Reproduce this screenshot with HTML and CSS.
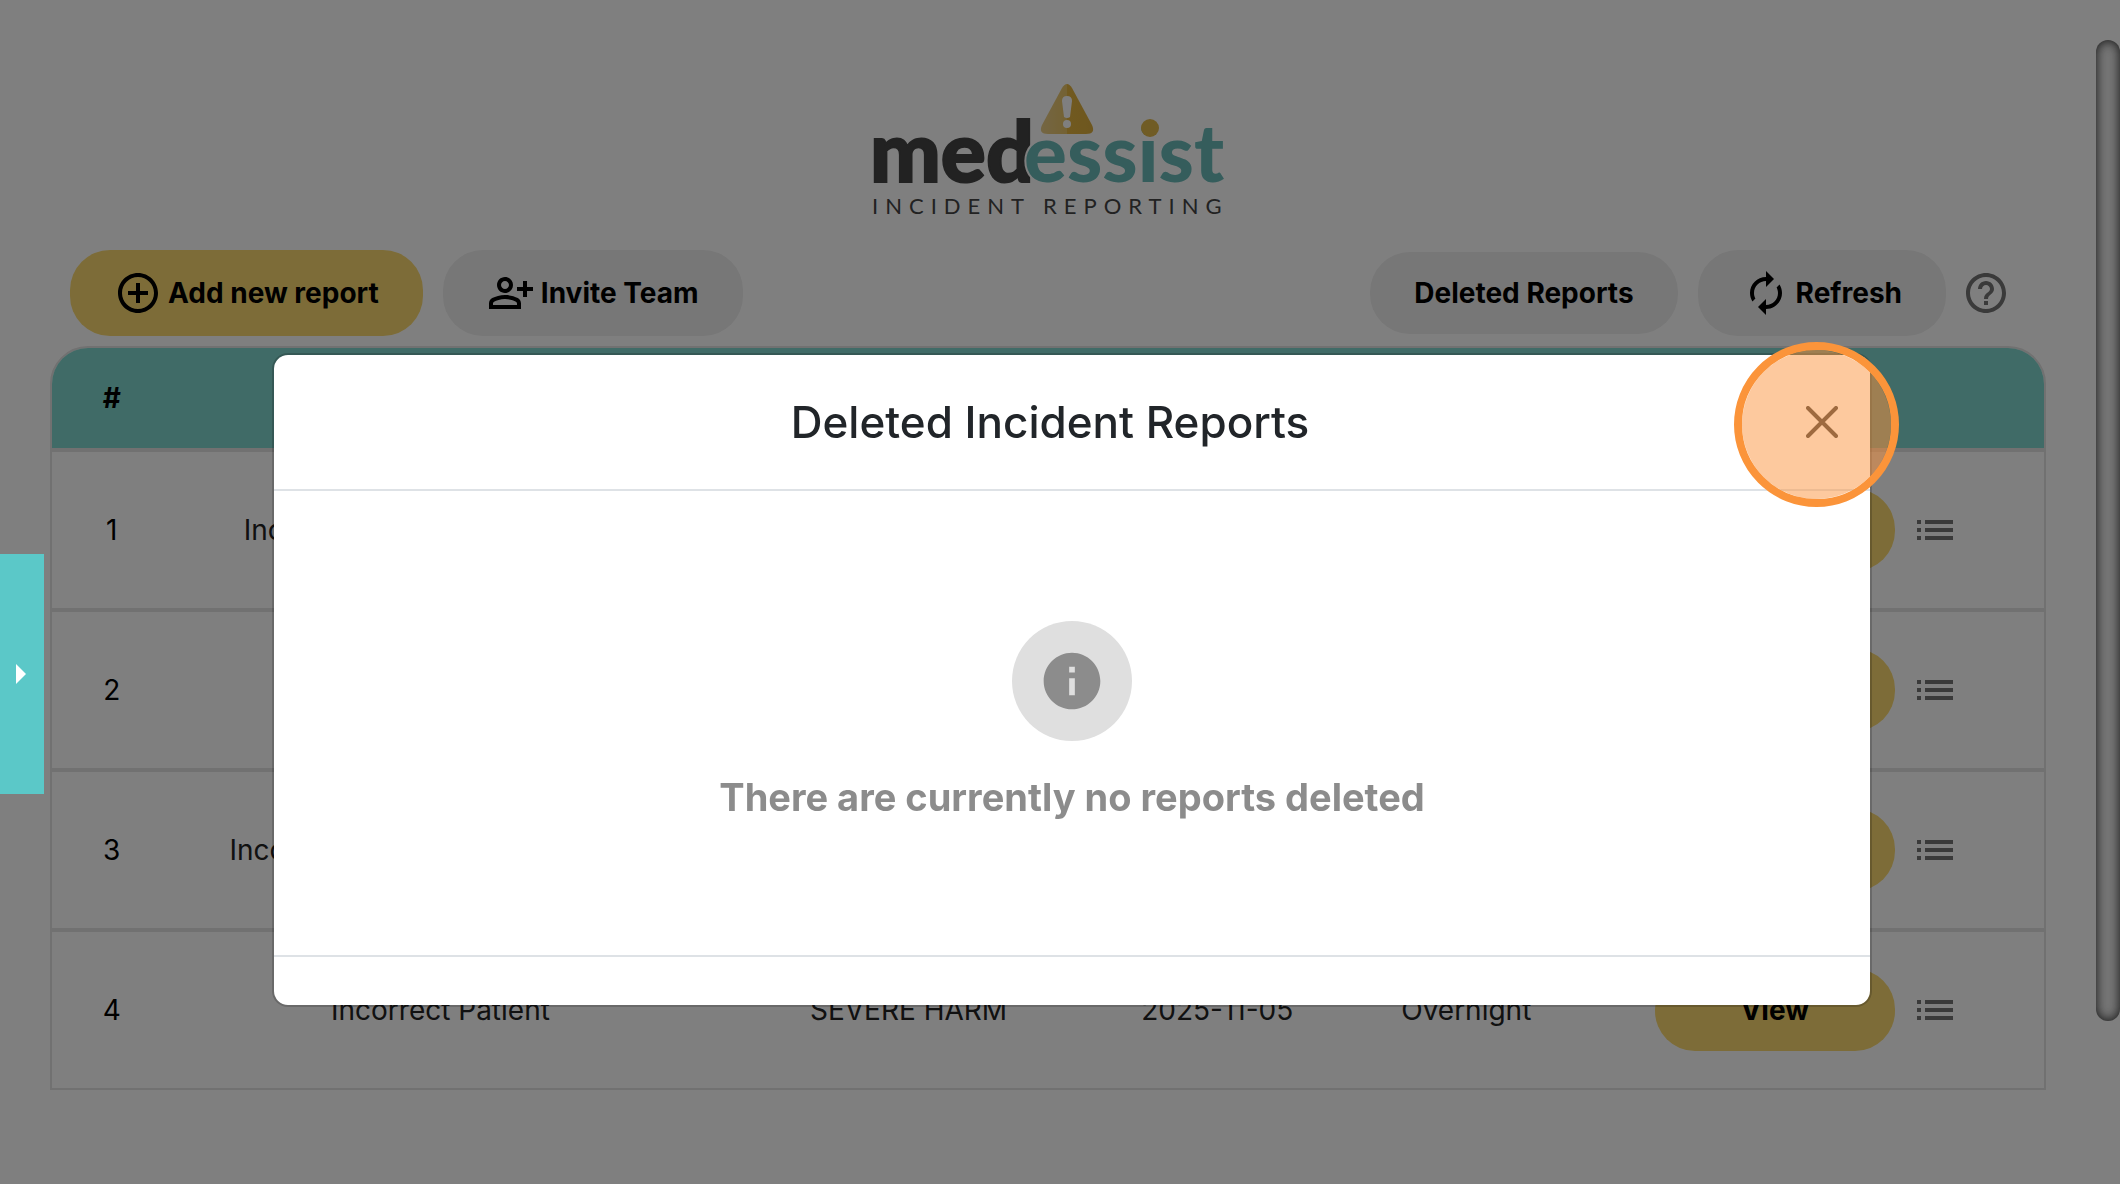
FILE: index.html
```
<!DOCTYPE html>
<html lang="en">
<head>
  <meta charset="utf-8">
  <title>Incident Reporting</title>
  <link rel="stylesheet" href="styles.css">
</head>
<body>
  <svg width="0" height="0" class="sprite" aria-hidden="true">
    <symbol id="icon-list" viewBox="0 0 24 24">
      <path d="M3 13h2v-2H3v2zm0 4h2v-2H3v2zm0-8h2V7H3v2zm4 4h14v-2H7v2zm0 4h14v-2H7v2zM7 7v2h14V7H7z"/>
    </symbol>
  </svg>

  <main class="page">
    <header class="logo">
      <svg width="360" height="140" viewBox="0 0 360 140" role="img" aria-label="medessist incident reporting">
        <defs>
          <linearGradient id="warn" x1="0" x2="1">
            <stop offset="0" stop-color="#e8cc88"/>
            <stop offset="0.5" stop-color="#e8c466"/>
            <stop offset="0.5" stop-color="#e3b440"/>
            <stop offset="1" stop-color="#dcae3e"/>
          </linearGradient>
        </defs>
        <text class="logo-med" x="2" y="104">med</text>
        <text class="logo-essist logo-halo" x="156" y="104" aria-hidden="true">essist</text>
        <circle cx="282" cy="50" r="9" fill="#e0b84a"/>
        <path fill="url(#warn)" d="M194 10q5-8 10 0l20 37q4 9-6 9h-38q-10 0-6-9z"/>
        <path fill="#fff" d="M194 23q0-5 5-5t5 5l-2 16q-3 2-6 0z"/>
        <circle cx="199" cy="46" r="4" fill="#fff"/>
        <text class="logo-sub" x="4" y="136">INCIDENT REPORTING</text>
      </svg>
    </header>

    <div class="toolbar">
      <button class="btn btn-primary" type="button">
        <svg class="icon" viewBox="0 0 24 24"><path d="M13 7h-2v4H7v2h4v4h2v-4h4v-2h-4V7zm-1-5C6.48 2 2 6.48 2 12s4.48 10 10 10 10-4.48 10-10S17.52 2 12 2zm0 18c-4.41 0-8-3.59-8-8s3.59-8 8-8 8 3.59 8 8-3.59 8-8 8z"/></svg>
        Add new report
      </button>
      <button class="btn btn-invite" type="button">
        <svg class="icon" viewBox="0 0 24 24"><path d="M20 9V6h-2v3h-3v2h3v3h2v-3h3V9h-3zM9 12c2.21 0 4-1.790 4-4s-1.790-4-4-4-4 1.790-4 4 1.790 4 4 4zm0-6c1.100 0 2 .9 2 2s-.9 2-2 2-2-.9-2-2 .9-2 2-2zm6.390 8.560C13.710 13.700 11.530 13 9 13s-4.710.7-6.390 1.560C1.610 15.070 1 16.100 1 17.220V20h16v-2.780c0-1.120-.61-2.150-1.610-2.660zM15 18H3v-.78c0-.38.2-.72.52-.88C4.710 15.730 6.630 15 9 15s4.290.73 5.480 1.340c.32.16.52.5.52.88V18z"/></svg>
        Invite Team
      </button>
      <button class="btn btn-deleted" type="button">Deleted Reports</button>
      <button class="btn btn-refresh" type="button">
        <svg class="icon" viewBox="0 0 24 24"><path d="M12 6v3l4-4-4-4v3c-4.420 0-8 3.580-8 8 0 1.570.46 3.030 1.240 4.260L6.700 14.800c-.45-.83-.7-1.790-.7-2.800 0-3.310 2.690-6 6-6zm6.760 1.740L17.300 9.200c.44.84.7 1.790.7 2.800 0 3.310-2.690 6-6 6v-3l-4 4 4 4v-3c4.420 0 8-3.580 8-8 0-1.570-.46-3.030-1.240-4.260z"/></svg>
        Refresh
      </button>
      <button class="btn-icon" type="button" aria-label="Help">
        <svg width="40" height="40" viewBox="2 2 20 20"><path d="M11 18h2v-2h-2v2zm1-16C6.480 2 2 6.480 2 12s4.480 10 10 10 10-4.480 10-10S17.520 2 12 2zm0 18c-4.410 0-8-3.590-8-8s3.590-8 8-8 8 3.590 8 8-3.590 8-8 8zm0-14c-2.210 0-4 1.790-4 4h2c0-1.100.9-2 2-2s2 .9 2 2c0 2-3 1.750-3 5h2c0-2.250 3-2.500 3-5 0-2.210-1.790-4-4-4z"/></svg>
      </button>
    </div>

    <div class="table-wrap">
      <table class="reports">
        <thead>
          <tr>
            <th class="col-num">#</th>
            <th class="col-type" aria-label="Type"></th>
            <th class="col-harm" aria-label="Severity"></th>
            <th class="col-date" aria-label="Date"></th>
            <th class="col-shift" aria-label="Shift"></th>
            <th aria-label="Actions"></th>
          </tr>
        </thead>
        <tbody>
          <tr>
            <td>1</td>
            <td>Incorrect Medication Quantity</td>
            <td>NO HARM</td>
            <td>2025-11-05</td>
            <td>Morning</td>
            <td><div class="actions"><button class="btn btn-view" type="button">View</button><button class="btn-icon" type="button" aria-label="Options"><svg class="icon"><use href="#icon-list"/></svg></button></div></td>
          </tr>
          <tr>
            <td>2</td>
            <td>Incorrect Patient</td>
            <td>NO HARM</td>
            <td>2025-11-05</td>
            <td>Morning</td>
            <td><div class="actions"><button class="btn btn-view" type="button">View</button><button class="btn-icon" type="button" aria-label="Options"><svg class="icon"><use href="#icon-list"/></svg></button></div></td>
          </tr>
          <tr>
            <td>3</td>
            <td>Incorrect Medication Dispensed</td>
            <td>MILD HARM</td>
            <td>2025-11-05</td>
            <td>Overnight</td>
            <td><div class="actions"><button class="btn btn-view" type="button">View</button><button class="btn-icon" type="button" aria-label="Options"><svg class="icon"><use href="#icon-list"/></svg></button></div></td>
          </tr>
          <tr>
            <td>4</td>
            <td>Incorrect Patient</td>
            <td>SEVERE HARM</td>
            <td>2025-11-05</td>
            <td>Overnight</td>
            <td><div class="actions"><button class="btn btn-view" type="button">View</button><button class="btn-icon" type="button" aria-label="Options"><svg class="icon"><use href="#icon-list"/></svg></button></div></td>
          </tr>
        </tbody>
      </table>
    </div>
  </main>

  <div class="backdrop"></div>
  <div class="scroll-thumb"></div>
  <button class="side-tab" type="button" aria-label="Open menu"><span class="arrow"></span></button>

  <div class="modal-holder">
    <section class="modal" role="dialog" aria-labelledby="modal-title">
      <header class="modal-header">
        <h1 id="modal-title">Deleted Incident Reports</h1>
        <button class="btn-close" type="button" aria-label="Close">
          <svg width="32" height="32" viewBox="0 0 32 32"><path d="M2 2l28 28M30 2L2 30"/></svg>
          <span class="click-marker"></span>
        </button>
      </header>
      <div class="modal-body">
        <div class="info">
          <svg width="68" height="68" viewBox="0 0 24 24"><path d="M12 2C6.480 2 2 6.480 2 12s4.480 10 10 10 10-4.480 10-10S17.520 2 12 2zm1 15h-2v-6h2v6zm0-8h-2V7h2v2z"/></svg>
        </div>
        <p>There are currently no reports deleted</p>
      </div>
      <footer class="modal-footer"></footer>
    </section>
  </div>
</body>
</html>
```

FILE: styles.css
```
* {
  box-sizing: border-box;
}
body {
  margin: 0;
  min-height: 100vh;
  background: #fff;
  color: #222;
  font-family: Inter, "Liberation Sans", sans-serif;
  font-size: 28px;
}
button {
  border: 0;
  background: none;
  font: inherit;
  color: #000;
  padding: 0;
  cursor: pointer;
}
.sprite {
  position: absolute;
}
.icon {
  display: block;
  flex: none;
  width: 48px;
  height: 48px;
  fill: currentColor;
}

.page {
  padding: 78px 74px 0 50px;
}
.logo {
  display: flex;
  justify-content: center;
  margin-bottom: 32px;
}
.logo-med,
.logo-essist {
  font-family: Lato, sans-serif;
  font-size: 80px;
  font-weight: 900;
}
.logo-med {
  font-size: 84px;
  fill: #444;
  stroke: #444;
  stroke-width: 2;
}
.logo-essist {
  fill: #6abab8;
}
.logo-halo {
  stroke: #fff;
  stroke-width: 4;
  paint-order: stroke;
}
.logo-sub {
  font-family: Lato, sans-serif;
  font-size: 22px;
  letter-spacing: 7px;
  fill: #444;
}

.toolbar {
  display: flex;
  align-items: center;
  gap: 20px;
  padding: 0 40px 0 20px;
  margin-bottom: 10px;
}
.btn {
  display: flex;
  align-items: center;
  justify-content: center;
  gap: 6px;
  height: 86px;
  padding: 0 44px;
  border-radius: 40px;
  background: #eee;
  font-weight: 700;
}
.btn-primary,
.btn-view {
  background: #fad970;
}
.btn-deleted {
  height: 82px;
  margin-left: auto;
}
.btn-icon {
  color: #757575;
}
.btn-icon svg {
  display: block;
  fill: currentColor;
}

.table-wrap {
  border: 2px solid #e2e2e2;
  border-radius: 38px 38px 0 0;
  overflow: hidden;
}
.reports {
  width: 100%;
  table-layout: fixed;
  border-collapse: separate;
  border-spacing: 0;
  text-align: center;
}
.reports th,
.reports td {
  padding: 0;
  border-bottom: 4px solid #e2e2e2;
  white-space: nowrap;
}
.reports th {
  height: 104px;
  background: #80d6ce;
  color: #000;
  font-weight: 700;
}
.reports td {
  height: 160px;
}
.reports td:first-child {
  color: #000;
}
.reports tr:last-child td {
  height: 156px;
  border-bottom: 0;
}
.col-num { width: 6%; }
.col-type { width: 27%; }
.col-harm { width: 20%; }
.col-date { width: 11%; }
.col-shift { width: 14%; }
.actions {
  display: flex;
  align-items: center;
  gap: 16px;
  padding-left: 49px;
}
.btn-view {
  width: 240px;
  height: 82px;
}

.backdrop {
  position: fixed;
  inset: 0;
  background: rgba(0, 0, 0, 0.5);
}
.scroll-thumb {
  position: fixed;
  top: 40px;
  right: 0;
  bottom: 163px;
  width: 24px;
  border-radius: 12px;
  background: #777;
  box-shadow: inset 0 0 12px #111;
}
.side-tab {
  position: fixed;
  top: 554px;
  left: 0;
  width: 44px;
  height: 240px;
  background: #5bc8c8;
}
.arrow {
  display: block;
  width: 10px;
  height: 20px;
  margin-left: 16px;
  background: #fff;
  clip-path: polygon(0 0, 100% 50%, 0 100%);
}

.modal-holder {
  position: fixed;
  inset: 0 0 0 24px;
  display: flex;
  justify-content: center;
  align-items: flex-start;
  padding-top: 353px;
}
.modal {
  width: 1600px;
  max-width: 100%;
  background: #fff;
  background-clip: padding-box;
  border: 2px solid rgba(0, 0, 0, 0.175);
  border-radius: 16px;
}
.modal-header {
  display: flex;
  align-items: center;
  height: 136px;
  padding: 0 32px 0 0;
  border-bottom: 2px solid #dee2e6;
}
.modal-header h1 {
  flex: 1;
  margin: 0;
  padding-left: 20px;
  color: #212529;
  font-size: 44px;
  font-weight: 500;
  text-align: center;
}
.btn-close {
  position: relative;
}
.btn-close svg {
  display: block;
  fill: none;
  stroke: #404040;
  stroke-width: 4;
  stroke-linecap: round;
}
.click-marker {
  position: absolute;
  top: -64px;
  left: -72px;
  width: 165px;
  height: 165px;
  border: 8px solid #fb943a;
  border-radius: 50%;
  background: rgba(251, 148, 62, 0.5);
  background-clip: padding-box;
}
.modal-body {
  display: flex;
  flex-direction: column;
  align-items: center;
  padding: 130px 32px 134px;
}
.info {
  display: flex;
  align-items: center;
  justify-content: center;
  width: 120px;
  height: 120px;
  border-radius: 50%;
  background: #dfdfdf;
}
.info svg {
  fill: #8c8c8c;
}
.modal-body p {
  margin: 32px 0 0;
  color: #8c8c8c;
  font-size: 38px;
  line-height: 48px;
  font-weight: 700;
}
.modal-footer {
  height: 50px;
  border-top: 2px solid #dee2e6;
}
```
